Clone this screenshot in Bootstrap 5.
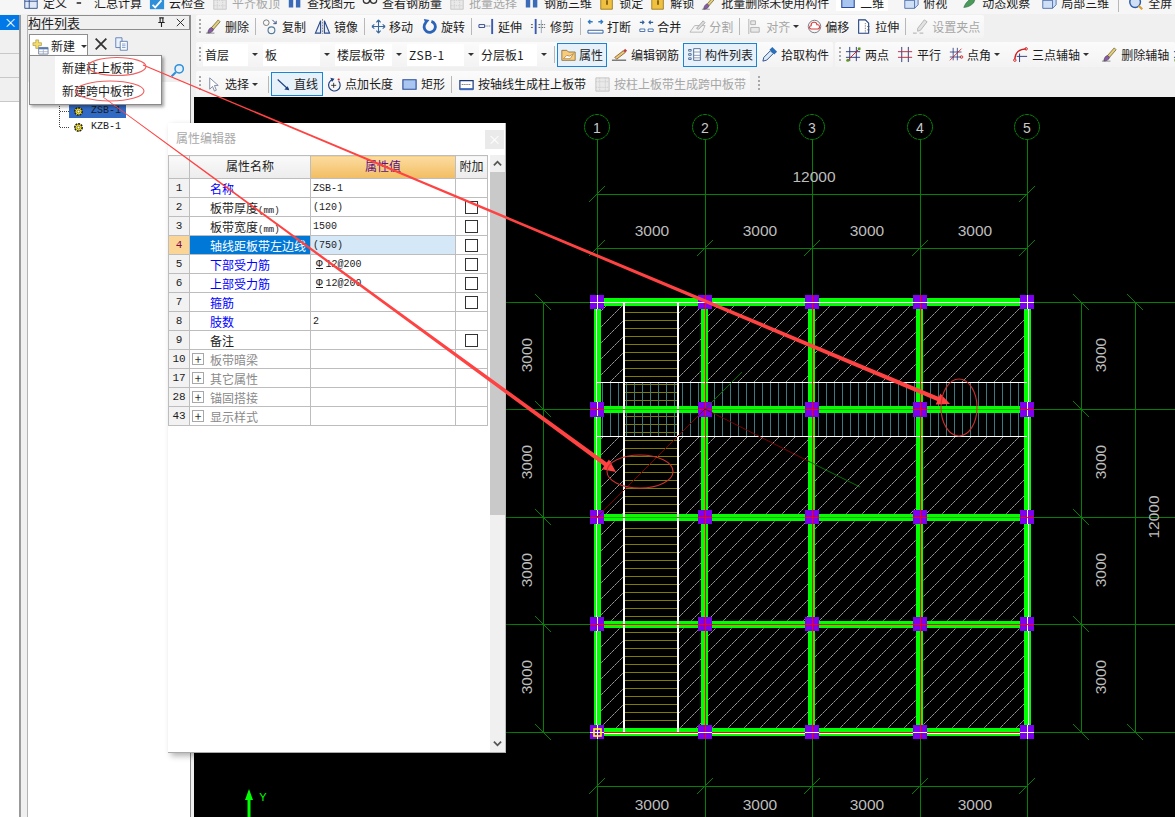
<!DOCTYPE html>
<html lang="zh-CN">
<head>
    <meta charset="UTF-8">
    <meta name="viewport" content="width=device-width, initial-scale=1.0">
    <title>构件列表</title>
    <link href="https://cdn.jsdelivr.net/npm/bootstrap@5.3.3/dist/css/bootstrap.min.css" rel="stylesheet">
    <style>
        body { margin: 0; background: #f0f0f0; font-family: "Noto Sans CJK SC", "Liberation Sans", sans-serif; font-size: 12px; color: #1c1c1c; }
        .app-frame { width: 1175px; height: 817px; overflow: hidden; background: #f0f0f0; }

        /* clipped ribbon along the top */
        .top-strip { height: 14px; overflow: hidden; }
        .top-inner { height: 24px; margin-top: -9px; padding-left: 23px; gap: 7px; background: #f6f6f6; }
        .top-item { gap: 4px; line-height: 1; white-space: nowrap; }
        .top-item svg { width: 16px; height: 16px; flex: none; }
        .top-now { width: 52px; background: #fff; padding-left: 4px; }
        .is-off { color: #a6a6a6; }

        /* left panes */
        .far-pane { width: 22px; flex: none; }
        .far-inner { width: 21px; height: 100%; margin-top: 1px; background: #fff; border-right: 2px solid #9a9a9a; }
        .far-tab { height: 15px; background: #0078e7; color: #fff; font-size: 13px; line-height: 14px; text-align: right; padding-right: 2px; }
        .far-row { height: 24px; background: #f0f0f0; border-bottom: 1px solid #c8c8c8; }
        .gap-pane { width: 5px; flex: none; }
        .list-pane { width: 164px; flex: none; margin-top: 1px; background: #fff; border-left: 1px solid #b4b4b4; border-right: 1px solid #8e8e8e; }
        .pane-title { height: 15px; font-size: 13px; line-height: 14px; border: 1px solid #8c8c8c; border-left: 0; background: #f0f0f0; padding: 0 3px 0 0; }
        .pane-title svg { width: 11px; height: 11px; }
        .pane-tools { height: 28px; background: #f0f0f0; padding-left: 1px; gap: 5px; }
        .new-btn { width: 59px; height: 24px; margin-top: 3px; background: #fff; border: 1px solid #8e8e8e; border-bottom: 0; gap: 2px; padding-left: 2px; }
        .new-btn svg { width: 17px; height: 17px; }
        .pane-tools > svg { width: 16px; height: 16px; }
        .pane-search { height: 24px; background: #f0f0f0; padding-right: 5px; }
        .pane-search svg { width: 15px; height: 15px; }
        .tree-list { margin: 21px 0 0 31px; height: 24px; border-left: 1px dotted #444; }
        .tree-row { height: 16px; font-family: "Liberation Mono", monospace; font-size: 10px; }
        .tree-dash { width: 9px; border-top: 1px dotted #444; }
        .tree-name { width: 57px; height: 14px; gap: 7px; padding-left: 4px; line-height: 14px; }
        .tree-name svg { width: 11px; height: 11px; }
        .tree-on { background: #316ac5; }

        /* menu on top of the panel */
        .new-menu { position: absolute; display: block; left: 29px; top: 55px; width: 133px; height: 50px; min-width: 0; padding: 0; border: 1px solid #8a8a8a; border-radius: 0; box-shadow: 2px 2px 3px rgba(0,0,0,.35); background: linear-gradient(90deg, #f1f1f1 25px, #fff 25px); z-index: 20; }
        .new-menu .dropdown-item { padding: 0 0 0 32px; height: 23px; line-height: 23px; font-size: 12px; color: #1c1c1c; }

        /* toolbars */
        .work-pane { margin-left: 3px; min-width: 0; }
        .tool-rows { padding-left: 2px; }
        .tool-line { gap: 2px; white-space: nowrap; }
        .line-a { height: 23px; margin: 1px 0 4px; }
        .line-b { height: 25px; margin-bottom: 4px; }
        .line-c { height: 26px; }
        .tool-block { padding-left: 3px; background: linear-gradient(#fbfbfb, #f3f3f3); border-radius: 2px; }
        .tool-tail { flex: 1 1 auto; min-width: 0; overflow: hidden; padding-left: 4px; }
        .grip { width: 2px; height: 16px; flex: none; background: repeating-linear-gradient(#a8a8a8 0 2px, transparent 2px 4px); }
        .grip-out { margin-left: 6px; }
        .tsep { width: 1px; height: 17px; margin: 0 2px; flex: none; background: #b8b8b8; }
        .tbtn { gap: 3px; padding: 0 4px; line-height: 1; flex: none; }
        .tbtn svg { width: 17px; height: 17px; flex: none; }
        .tbtn svg.ti-s { width: 15px; }
        .tbtn-on { height: 24px; border: 1px solid #1a84d8; background: #e6f1fa; padding: 0 3px; }
        .tbtn-wide { padding: 0 4px; }
        .tcaret { width: 0; height: 0; margin-left: 0; border: 3px solid transparent; border-top: 3px solid #333; border-bottom: 0; flex: none; }
        .combo { height: 22px; margin-right: 1px; flex: none; }
        .combo-box { background: #fff; height: 22px; line-height: 22px; padding-left: 2px; flex: 1 1 auto; }
        .combo-arrow { width: 14px; text-align: center; flex: none; display: flex; align-items: center; justify-content: center; }
        .combo-a { width: 59px; margin-left: 2px; }
        .combo-b { width: 71px; }
        .combo-c { width: 71px; }
        .combo-d { width: 71px; }
        .combo-e { width: 72px; }
        .latin-up { font-family: "Noto Sans CJK SC", sans-serif; letter-spacing: .6px; }

        /* drawing */
        .cad-box { background: #000; min-height: 0; }
        .cad-box svg { display: block; }
        .cad-label { font-family: "Liberation Sans", sans-serif; font-size: 15.5px; fill: #bdbdbd; }
        .cad-num { font-family: "Liberation Sans", sans-serif; font-size: 14px; fill: #c8c8c8; }
        .cad-y { font-family: "Liberation Sans", sans-serif; font-size: 11px; fill: #00ff00; }

        /* property dialog */
        .prop-win { position: absolute; left: 168px; top: 123px; width: 338px; height: 630px; border: 0; border-right: 1px solid #bbb; border-bottom: 1px solid #aaa; border-radius: 0; background: #fff; box-shadow: 3px 3px 6px rgba(0,0,0,.3); z-index: 10; }
        .prop-head { height: 32px; padding: 6px 1px 0 8px; color: #a9a9a9; font-size: 12px; }
        .prop-close { width: 19px; height: 19px; margin-top: 1px; background: #eaeaea; color: #fff; font-size: 13px; line-height: 18px; text-align: center; }
        .prop-grid { width: 319px; table-layout: fixed; margin: 0; border-color: #bdbdbd; font-size: 12px; }
        .prop-grid > thead > tr > th, .prop-grid > tbody > tr > td { height: 19px; padding: 0; line-height: 17px; font-weight: 400; vertical-align: middle; color: #1c1c1c; background-color: #fff; border-color: #bdbdbd; overflow: hidden; white-space: nowrap; }
        .prop-grid > thead > tr > th { height: 23px; padding-bottom: 3px; text-align: center; background: linear-gradient(#fafafa, #ececec); }
        .prop-grid > thead > tr > th.head-val { background: linear-gradient(#fcdc9f, #f2bd62); color: #5c0f86; }
        .prop-grid > tbody > tr > td.cell-no { background-color: #f2f2f2; text-align: center; font-family: "Liberation Mono", monospace; font-size: 11px; }
        .prop-grid > tbody > tr > td.cell-name { padding-left: 20px; }
        .prop-grid > tbody > tr > td.name-link { color: #0000ff; }
        .prop-grid > tbody > tr > td.name-group { color: #8a8a8a; padding-left: 2px; }
        .prop-grid > tbody > tr > td.cell-val { padding-left: 2px; font-family: "Liberation Mono", monospace; font-size: 10px; }
        .prop-grid > tbody > tr > td.cell-add { text-align: center; }
        .prop-grid > tbody > tr.row-now > td.cell-no { background-color: #fbd595; color: #7c0a4a; }
        .prop-grid > tbody > tr.row-now > td.cell-name { background-color: #0078d7; color: #fff; }
        .prop-grid > tbody > tr.row-now > td.cell-val { background-color: #d5e8f8; }
        .col-no { width: 21px; }
        .col-name { width: 121px; }
        .col-val { width: 145px; }
        .col-add { width: 32px; }
        .unit-mm { font-family: "Liberation Mono", monospace; font-size: 9px; line-height: 1; }
        .rebar-mark { border-bottom: 1px solid #222; font-size: 11px; line-height: 8px; display: inline-block; margin: 0 3px 0 3px; }
        .add-box { display: block; width: 13px; height: 13px; margin: 0 auto; border: 1px solid #333; border-radius: 0; background: #fff; appearance: none; }
        .plus-box { width: 12px; height: 12px; border: 1px solid #a8a8a8; color: #333; font-size: 12px; line-height: 10px; text-align: center; margin-right: 6px; flex: none; }
        .prop-scroll { width: 17px; margin-left: 2px; background: #f0f0f0; }
        .scroll-end { height: 17px; }
        .scroll-end svg { width: 9px; height: 9px; }
        .scroll-thumb { height: 343px; background: #c9c9c9; }

        .note-layer { position: absolute; left: 0; top: 0; z-index: 30; pointer-events: none; }
    </style>
</head>
<body>
<svg width="0" height="0" class="d-block position-absolute">
    <defs>
        <symbol id="i-del" viewBox="0 0 18 18"><path d="M1 16h9" stroke="#888" fill="none"/><path d="M7 10l7-8 2 2-7 8z" fill="#e3cf7a" stroke="#6a5a2a" stroke-width=".8"/><path d="M3 16c0-3 2-6 4-6l2 2c0 2-3 4-6 4z" fill="#8a5aa8" stroke="#444" stroke-width=".6"/></symbol>
        <symbol id="i-copy" viewBox="0 0 18 18"><circle cx="4.5" cy="5" r="3" fill="none" stroke="#777"/><circle cx="10" cy="13" r="3.6" fill="none" stroke="#557a9a" stroke-width="1.2"/><path d="M11 2l4 4m0-3v3h-3" fill="none" stroke="#334a7a"/></symbol>
        <symbol id="i-mirror" viewBox="0 0 18 18"><path d="M1.5 16L7 3v13zM16.500 16L11 3v13z" fill="#e8eef8" stroke="#2b4a8a" stroke-width="1.200"/><path d="M9 1v16" stroke="#888" stroke-dasharray="2 1"/></symbol>
        <symbol id="i-move" viewBox="0 0 18 18"><path d="M9 1v16M1 9h16M9 1L6.500 4M9 1l2.500 3M9 17l-2.500-3M9 17l2.500-3M1 9l3-2.500M1 9l3 2.500M17 9l-3-2.500M17 9l-3 2.500" fill="none" stroke="#35689e" stroke-width="1.300"/></symbol>
        <symbol id="i-rotate" viewBox="0 0 18 18"><path d="M11 3.500a6 6 0 1 1-6 1.500" fill="none" stroke="#2a63b8" stroke-width="3"/><path d="M3 1l6 1-4 5z" fill="#2a63b8"/></symbol>
        <symbol id="i-extend" viewBox="0 0 18 18"><path d="M1 7h6v3H1z" fill="#fff" stroke="#2a3f8a"/><path d="M8 8.500h5" stroke="#555" stroke-dasharray="1 1"/><path d="M15 1v16" stroke="#3a5ab0" stroke-width="2"/></symbol>
        <symbol id="i-trim" viewBox="0 0 18 18"><path d="M6 1v16" stroke="#3a5ab0" stroke-width="2"/><path d="M1 7h3M1 10h3M9 7h7M9 10h7" stroke="#555" stroke-dasharray="2 1"/><path d="M12 2v14" stroke="#9ab" /></symbol>
        <symbol id="i-break" viewBox="0 0 18 18"><path d="M1 13h16v3H1z" fill="#fff" stroke="#2f5f9f"/><path d="M2 4h4M3.500 2L1.500 4l2 2M16 4h-4M14.500 2l2 2-2 2" fill="none" stroke="#2f7ac0" stroke-width="1.400"/></symbol>
        <symbol id="i-merge" viewBox="0 0 18 18"><path d="M1 12h6v3H1zM11 12h6v3h-6z" fill="#fff" stroke="#2f5f9f"/><path d="M1 4h5M4 2l2 2-2 2M17 4h-5M14 2l-2 2 2 2" fill="none" stroke="#2f5f9f" stroke-width="1.300"/></symbol>
        <symbol id="i-split" viewBox="0 0 18 18"><path d="M1 15l5-7h11l-3 7z" fill="#f4f4f4" stroke="#b8b8b8"/><path d="M8 11l7-8 2 2-7 7z" fill="#ddd" stroke="#aaa"/></symbol>
        <symbol id="i-align" viewBox="0 0 18 18"><path d="M3 1v16M5 3h5v4H5zM5 10h9v5H5z" fill="#e8e8e8" stroke="#b0b0b0"/></symbol>
        <symbol id="i-offset" viewBox="0 0 18 18"><circle cx="9" cy="9" r="7.500" fill="#f6f6f6" stroke="#667"/><path d="M5 12a2 2 0 0 1 0-4 3.500 3.500 0 0 1 7-1 2.500 2.500 0 0 1 1 5z" fill="#fff" stroke="#d84040" stroke-width="1.300"/></symbol>
        <symbol id="i-stretch" viewBox="0 0 18 18"><path d="M2 1h8l4 4v12H2z" fill="#fff" stroke="#1e3f80" stroke-width="1.300"/><path d="M10 5v12M12 9h4M12 13h4" stroke="#555" stroke-dasharray="1 1"/></symbol>
        <symbol id="i-setpt" viewBox="0 0 18 18"><path d="M1 16h4M8 16h4" stroke="#aaa"/><path d="M6 11l7-9 3 2-7 9-3 1z" fill="#e2e2e2" stroke="#b4b4b4"/></symbol>
        <symbol id="i-prop" viewBox="0 0 18 18"><path d="M1 4h6l2 2h8v10H1z" fill="#f7cd7c" stroke="#8a6a3a"/><path d="M3 14l4-4 3 1 5-3-4 6z" fill="#fff" stroke="#a0702a" stroke-width=".8"/></symbol>
        <symbol id="i-edit" viewBox="0 0 18 18"><path d="M1 15h15" stroke="#333"/><path d="M4 12l9-7 2 2-9 7z" fill="#e8c878" stroke="#7a4a1a" stroke-width=".8"/><path d="M13 5l2-2 2 2-2 2z" fill="#c04040"/></symbol>
        <symbol id="i-list" viewBox="0 0 18 18"><path d="M2 3h3v2H2zM2 8h3v2H2zM2 13h3v2H2z" fill="#fff" stroke="#3a5a8a"/><path d="M8 2h8v14H8z" fill="#fff" stroke="#3a5a8a"/><path d="M8 6h8M8 10h8M8 13h8" stroke="#7a8ab0"/></symbol>
        <symbol id="i-pick" viewBox="0 0 18 18"><path d="M2 16l1-4 7-7 3 3-7 7z" fill="#dcebf8" stroke="#2a4a8a"/><path d="M9 4l3-3 5 5-3 3z" fill="#2a6fb8"/></symbol>
        <symbol id="i-2pt" viewBox="0 0 18 18"><path d="M5 1v15M12 1v15M1 6h15M1 12h15" stroke="#2b3a80" fill="none"/><path d="M2 16L16 2" stroke="#d02020"/><circle cx="3" cy="15" r="1.600" fill="#5a9a20"/><circle cx="15" cy="3" r="1.600" fill="#5a9a20"/></symbol>
        <symbol id="i-par" viewBox="0 0 18 18"><path d="M5 1v16M12 1v16" stroke="#2b3a80"/><path d="M1 6h15M1 12h15" stroke="#c02840"/></symbol>
        <symbol id="i-ang" viewBox="0 0 18 18"><path d="M5 1v15M10 1v15M1 6h14M1 12h14" stroke="#2b3a80"/><path d="M1 16L15 2" stroke="#d02020"/><circle cx="15" cy="12" r="1.600" fill="none" stroke="#d02020"/></symbol>
        <symbol id="i-arc" viewBox="0 0 18 18"><path d="M3 14C3 7 8 3 15 3" fill="none" stroke="#d02020" stroke-width="1.300"/><circle cx="3" cy="15" r="1.300" fill="none" stroke="#d02020"/><circle cx="15" cy="3" r="1.300" fill="none" stroke="#d02020"/><path d="M8 8v9M5 11h11" stroke="#2b3a80"/></symbol>
        <symbol id="i-cursor" viewBox="0 0 18 18"><path d="M5 2v12l3-3 2 5 2-1-2-5h4z" fill="#fff" stroke="#8088a0"/></symbol>
        <symbol id="i-line" viewBox="0 0 18 18"><path d="M2 3l13 12" stroke="#1e3f80" stroke-width="1.300"/><path d="M16 16l-6-1 4-4z" fill="#1e3f80"/></symbol>
        <symbol id="i-len" viewBox="0 0 18 18"><path d="M7 3a7 7 0 1 0 7 2" fill="none" stroke="#1e3f80" stroke-width="1.400"/><path d="M4 1l5 1-3 4z" fill="#1e3f80"/><path d="M8 7v6M5 10h6" stroke="#222"/><circle cx="14" cy="3" r="1.300" fill="#d02020"/></symbol>
        <symbol id="i-rect" viewBox="0 0 18 18"><path d="M2 4h14v10H2z" fill="#a9c6f0" stroke="#2a4a9a" stroke-width="1.200"/></symbol>
        <symbol id="i-gen" viewBox="0 0 18 18"><path d="M2 5h14v9H2z" fill="#fff" stroke="#1e3a7a" stroke-width="1.300"/><path d="M4 9h10" stroke="#444" stroke-dasharray="1 1"/><path d="M2 14h14" stroke="#3a6ac0" stroke-width="2"/></symbol>
        <symbol id="i-gen2" viewBox="0 0 18 18"><path d="M2 2h14v14H2z" fill="#e9e9e9" stroke="#c4c4c4"/><path d="M6 2v14M12 2v14M2 6h14M2 12h14" stroke="#c9c9c9" stroke-dasharray="1 1"/></symbol>
        <symbol id="i-new" viewBox="0 0 18 18"><path d="M1 5h3V2h3v3h3v3H7v3H4V8H1z" fill="#f3dc6a" stroke="#a08a30" stroke-width=".6"/><path d="M7 10h10v7H7z" fill="#fff" stroke="#7a8aa8"/><path d="M7 10h10v2H7z" fill="#5a7ab0"/><path d="M7 14.500h10M12 12v5" stroke="#9aa8c0" stroke-width=".8"/></symbol>
        <symbol id="i-cross" viewBox="0 0 18 18"><path d="M3 3l12 12M15 3L3 15" stroke="#333" stroke-width="2"/></symbol>
        <symbol id="i-docs" viewBox="0 0 18 18"><path d="M2 2h7v11H2z" fill="#eaf1fb" stroke="#5a7ab0"/><path d="M7 6h8v10H7z" fill="#fff" stroke="#5a7ab0"/><path d="M9 9h4M9 11h4M9 13h4" stroke="#7a9ac8"/></symbol>
        <symbol id="i-pin" viewBox="0 0 12 12"><path d="M3.500 1h5M4.500 1v5M7.500 1v5M2.500 6h7M6 6v5" fill="none" stroke="#222" stroke-width="1.200"/></symbol>
        <symbol id="i-close" viewBox="0 0 12 12"><path d="M2 2l8 8M10 2l-8 8" stroke="#222"/></symbol>
        <symbol id="i-search" viewBox="0 0 18 18"><circle cx="11" cy="7" r="5" fill="#e4f1fc" stroke="#2f8fd8" stroke-width="1.800"/><path d="M7 11l-5 5" stroke="#2f8fd8" stroke-width="2.500"/></symbol>
        <symbol id="i-gear" viewBox="0 0 12 12"><circle cx="6" cy="6" r="4" fill="#f6e21a" stroke="#222" stroke-width="1.800" stroke-dasharray="2 1"/><circle cx="6" cy="6" r="1.500" fill="#fff" stroke="#333" stroke-width=".6"/></symbol>
        <symbol id="i-table" viewBox="0 0 18 18"><path d="M2 3h14v12H2z" fill="#dfe8f6" stroke="#2b4a8a"/><path d="M2 7h14M7 3v12" stroke="#2b4a8a"/></symbol>
        <symbol id="i-sum" viewBox="0 0 18 18"><path d="M3 4h8M3 9h5" stroke="#222" stroke-width="1.600"/></symbol>
        <symbol id="i-cloud" viewBox="0 0 18 18"><path d="M1 3h16v13H1z" fill="#2f8fd8"/><path d="M4 11l3 3 7-8" fill="none" stroke="#fff" stroke-width="2"/></symbol>
        <symbol id="i-find" viewBox="0 0 18 18"><path d="M2 2h5v12H2zM10 2h5v12h-5z" fill="#3a6ab8"/></symbol>
        <symbol id="i-glass" viewBox="0 0 18 18"><circle cx="5" cy="6" r="3.500" fill="none" stroke="#333" stroke-width="1.400"/><circle cx="13" cy="6" r="3.500" fill="none" stroke="#333" stroke-width="1.400"/></symbol>
        <symbol id="i-lock" viewBox="0 0 18 18"><path d="M2 1h13v15H2z" fill="#f0c040" stroke="#9a7a20"/><path d="M8 6h2v5H8z" fill="#7a5a10"/></symbol>
        <symbol id="i-box" viewBox="0 0 18 18"><path d="M2 6l4-4h11v9l-4 4H2z" fill="#cfe0f6" stroke="#4a6aa8"/><path d="M2 6h11v9M13 6l4-4" fill="none" stroke="#4a6aa8"/></symbol>
        <symbol id="i-orbit" viewBox="0 0 18 18"><path d="M2 14C5 6 11 3 16 2l-3 7c-3 3-7 5-11 5z" fill="#4a9a5a" stroke="#2a5a3a" stroke-width=".6"/></symbol>
        <symbol id="i-scan" viewBox="0 0 18 18"><circle cx="8" cy="8" r="6" fill="#cfe0f6" stroke="#2a5aa8" stroke-width="1.600"/><path d="M12 12l4 4" stroke="#d8a030" stroke-width="2.500"/></symbol>
    </defs>
</svg>

<div class="app-frame position-relative d-flex flex-column">
    <!-- Ribbon, cut by the window edge -->
    <div class="top-strip flex-shrink-0">
        <div class="top-inner d-flex align-items-center">
            <span class="top-item d-flex align-items-center"><svg><use href="#i-table"/></svg>定义</span>
            <span class="top-item d-flex align-items-center"><svg><use href="#i-sum"/></svg>汇总计算</span>
            <span class="top-item d-flex align-items-center"><svg><use href="#i-cloud"/></svg>云检查</span>
            <span class="top-item d-flex align-items-center is-off"><svg><use href="#i-gen2"/></svg>平齐板顶</span>
            <span class="top-item d-flex align-items-center"><svg><use href="#i-find"/></svg>查找图元</span>
            <span class="top-item d-flex align-items-center"><svg><use href="#i-glass"/></svg>查看钢筋量</span>
            <span class="top-item d-flex align-items-center is-off"><svg><use href="#i-gen2"/></svg>批量选择</span>
            <span class="top-item d-flex align-items-center"><svg><use href="#i-find"/></svg>钢筋三维</span>
            <span class="top-item d-flex align-items-center"><svg><use href="#i-lock"/></svg>锁定</span>
            <span class="top-item d-flex align-items-center"><svg><use href="#i-lock"/></svg>解锁</span>
            <span class="top-item d-flex align-items-center"><svg><use href="#i-del"/></svg>批量删除未使用构件</span>
            <span class="top-item top-now d-flex align-items-center"><svg><use href="#i-rect"/></svg>二维</span>
            <span class="top-item d-flex align-items-center ms-2"><svg><use href="#i-box"/></svg>俯视</span>
            <span class="top-item d-flex align-items-center ms-2"><svg><use href="#i-orbit"/></svg>动态观察</span>
            <span class="top-item d-flex align-items-center ms-1"><svg><use href="#i-box"/></svg>局部三维</span>
            <span class="tsep"></span>
            <span class="top-item d-flex align-items-center"><svg><use href="#i-scan"/></svg>全屏</span>
        </div>
    </div>

    <div class="d-flex flex-grow-1 overflow-hidden">
        <!-- Collapsed navigation pane -->
        <div class="far-pane">
            <div class="far-inner">
                <div class="far-tab">×</div>
                <div class="far-row"></div>
                <div class="far-row"></div>
                <div class="far-row"></div>
            </div>
        </div>
        <div class="gap-pane"></div>

        <!-- 构件列表 -->
        <div class="list-pane d-flex flex-column">
            <div class="pane-title d-flex align-items-center justify-content-between">
                <span>构件列表</span>
                <span class="d-flex gap-2"><svg><use href="#i-pin"/></svg><svg><use href="#i-close"/></svg></span>
            </div>
            <div class="pane-tools d-flex align-items-center">
                <div class="new-btn d-flex align-items-center"><svg><use href="#i-new"/></svg>新建<span class="tcaret ms-1"></span></div>
                <svg><use href="#i-cross"/></svg>
                <svg><use href="#i-docs"/></svg>
            </div>
            <div class="pane-search d-flex align-items-center justify-content-end"><svg><use href="#i-search"/></svg></div>
            <div class="tree-list">
                <div class="tree-row d-flex align-items-center">
                    <span class="tree-dash"></span>
                    <span class="tree-name tree-on d-flex align-items-center"><svg><use href="#i-gear"/></svg>ZSB-1</span>
                </div>
                <div class="tree-row d-flex align-items-center">
                    <span class="tree-dash"></span>
                    <span class="tree-name d-flex align-items-center"><svg><use href="#i-gear"/></svg>KZB-1</span>
                </div>
            </div>
        </div>

        <!-- Toolbars and drawing -->
        <div class="work-pane d-flex flex-column flex-grow-1">
            <div class="tool-rows">
                <div class="tool-line line-a d-flex">
                    <div class="tool-block d-flex align-items-center">
                        <span class="grip"></span>
                        <span class="tbtn d-flex align-items-center"><svg><use href="#i-del"/></svg>删除</span>
                        <span class="tsep"></span>
                        <span class="tbtn d-flex align-items-center"><svg><use href="#i-copy"/></svg>复制</span>
                        <span class="tbtn d-flex align-items-center"><svg><use href="#i-mirror"/></svg>镜像</span>
                        <span class="tsep"></span>
                        <span class="tbtn d-flex align-items-center"><svg class="ti-s"><use href="#i-move"/></svg>移动</span>
                        <span class="tbtn d-flex align-items-center"><svg><use href="#i-rotate"/></svg>旋转</span>
                        <span class="tsep"></span>
                        <span class="tbtn d-flex align-items-center"><svg><use href="#i-extend"/></svg>延伸</span>
                        <span class="tbtn d-flex align-items-center"><svg><use href="#i-trim"/></svg>修剪</span>
                        <span class="tsep"></span>
                        <span class="tbtn d-flex align-items-center"><svg><use href="#i-break"/></svg>打断</span>
                        <span class="tbtn d-flex align-items-center"><svg class="ti-s"><use href="#i-merge"/></svg>合并</span>
                        <span class="tbtn d-flex align-items-center is-off"><svg><use href="#i-split"/></svg>分割</span>
                        <span class="tsep"></span>
                        <span class="tbtn d-flex align-items-center is-off"><svg><use href="#i-align"/></svg>对齐<span class="tcaret"></span></span>
                        <span class="tbtn d-flex align-items-center"><svg class="ti-s"><use href="#i-offset"/></svg>偏移</span>
                        <span class="tbtn d-flex align-items-center"><svg class="ti-s"><use href="#i-stretch"/></svg>拉伸</span>
                        <span class="tsep"></span>
                        <span class="tbtn d-flex align-items-center is-off"><svg><use href="#i-setpt"/></svg>设置夹点</span>
                    </div>
                </div>

                <div class="tool-line line-b d-flex">
                    <div class="tool-block d-flex align-items-center">
                        <span class="grip"></span>
                        <div class="combo combo-a d-flex"><span class="combo-box">首层</span><span class="combo-arrow"><span class="tcaret"></span></span></div>
                        <div class="combo combo-b d-flex"><span class="combo-box">板</span><span class="combo-arrow"><span class="tcaret"></span></span></div>
                        <div class="combo combo-c d-flex"><span class="combo-box">楼层板带</span><span class="combo-arrow"><span class="tcaret"></span></span></div>
                        <div class="combo combo-d d-flex"><span class="combo-box latin-up">ZSB-1</span><span class="combo-arrow"><span class="tcaret"></span></span></div>
                        <div class="combo combo-e d-flex"><span class="combo-box">分层板1</span><span class="combo-arrow"><span class="tcaret"></span></span></div>
                        <span class="tsep"></span>
                        <span class="tbtn tbtn-on d-flex align-items-center"><svg class="ti-s"><use href="#i-prop"/></svg>属性</span>
                        <span class="tbtn d-flex align-items-center"><svg><use href="#i-edit"/></svg>编辑钢筋</span>
                        <span class="tbtn tbtn-on d-flex align-items-center"><svg class="ti-s"><use href="#i-list"/></svg>构件列表</span>
                        <span class="tbtn d-flex align-items-center"><svg><use href="#i-pick"/></svg>拾取构件</span>
                    </div>
                    <div class="tool-block tool-tail d-flex align-items-center">
                        <span class="grip"></span>
                        <span class="tbtn d-flex align-items-center"><svg><use href="#i-2pt"/></svg>两点</span>
                        <span class="tbtn d-flex align-items-center"><svg><use href="#i-par"/></svg>平行</span>
                        <span class="tbtn d-flex align-items-center"><svg class="ti-s"><use href="#i-ang"/></svg>点角<span class="tcaret"></span></span>
                        <span class="tbtn d-flex align-items-center ms-1"><svg><use href="#i-arc"/></svg>三点辅轴<span class="tcaret"></span></span>
                        <span class="tbtn d-flex align-items-center ms-1"><svg><use href="#i-del"/></svg>删除辅轴</span>
                        <span class="tbtn d-flex align-items-center ps-0"><svg><use href="#i-2pt"/></svg></span>
                    </div>
                </div>

                <div class="tool-line line-c d-flex">
                    <div class="tool-block d-flex align-items-center">
                        <span class="grip"></span>
                        <span class="tbtn d-flex align-items-center me-1"><svg><use href="#i-cursor"/></svg>选择<span class="tcaret"></span></span>
                        <span class="tsep"></span>
                        <span class="tbtn tbtn-on tbtn-wide d-flex align-items-center"><svg class="ti-s"><use href="#i-line"/></svg>直线</span>
                        <span class="tbtn d-flex align-items-center"><svg class="ti-s"><use href="#i-len"/></svg>点加长度</span>
                        <span class="tbtn d-flex align-items-center"><svg><use href="#i-rect"/></svg>矩形</span>
                        <span class="tsep"></span>
                        <span class="tbtn d-flex align-items-center"><svg><use href="#i-gen"/></svg>按轴线生成柱上板带</span>
                        <span class="tbtn d-flex align-items-center is-off"><svg><use href="#i-gen2"/></svg>按柱上板带生成跨中板带</span>
                    </div>
                    <span class="grip grip-out align-self-center"></span>
                </div>
            </div>

            <div class="cad-box flex-grow-1">
                <svg id="cad" width="981" height="720" viewBox="194 97 981 720"></svg>
            </div>
        </div>
    </div>

    <!-- New-item menu -->
    <ul class="dropdown-menu new-menu show">
        <li><a class="dropdown-item" href="#">新建柱上板带</a></li>
        <li><a class="dropdown-item" href="#">新建跨中板带</a></li>
    </ul>

    <!-- Property editor -->
    <div class="card prop-win">
        <div class="prop-head d-flex justify-content-between">
            <span>属性编辑器</span>
            <span class="prop-close">×</span>
        </div>
        <div class="d-flex flex-grow-1">
            <table class="table table-bordered prop-grid align-self-start">
                <thead>
                    <tr><th class="col-no"></th><th class="col-name">属性名称</th><th class="col-val head-val">属性值</th><th class="col-add">附加</th></tr>
                </thead>
                <tbody>
                    <tr><td class="cell-no">1</td><td class="cell-name name-link">名称</td><td class="cell-val">ZSB-1</td><td class="cell-add"></td></tr>
                    <tr><td class="cell-no">2</td><td class="cell-name">板带厚度<span class="unit-mm">(mm)</span></td><td class="cell-val">(120)</td><td class="cell-add"><input class="add-box" type="checkbox"></td></tr>
                    <tr><td class="cell-no">3</td><td class="cell-name">板带宽度<span class="unit-mm">(mm)</span></td><td class="cell-val">1500</td><td class="cell-add"><input class="add-box" type="checkbox"></td></tr>
                    <tr class="row-now"><td class="cell-no">4</td><td class="cell-name">轴线距板带左边线</td><td class="cell-val">(750)</td><td class="cell-add"><input class="add-box" type="checkbox"></td></tr>
                    <tr><td class="cell-no">5</td><td class="cell-name name-link">下部受力筋</td><td class="cell-val"><span class="rebar-mark">Φ</span>12@200</td><td class="cell-add"><input class="add-box" type="checkbox"></td></tr>
                    <tr><td class="cell-no">6</td><td class="cell-name name-link">上部受力筋</td><td class="cell-val"><span class="rebar-mark">Φ</span>12@200</td><td class="cell-add"><input class="add-box" type="checkbox"></td></tr>
                    <tr><td class="cell-no">7</td><td class="cell-name name-link">箍筋</td><td class="cell-val"></td><td class="cell-add"><input class="add-box" type="checkbox"></td></tr>
                    <tr><td class="cell-no">8</td><td class="cell-name name-link">肢数</td><td class="cell-val">2</td><td class="cell-add"></td></tr>
                    <tr><td class="cell-no">9</td><td class="cell-name">备注</td><td class="cell-val"></td><td class="cell-add"><input class="add-box" type="checkbox"></td></tr>
                    <tr><td class="cell-no">10</td><td class="cell-name name-group"><div class="d-flex align-items-center"><span class="plus-box">+</span>板带暗梁</div></td><td class="cell-val"></td><td class="cell-add"></td></tr>
                    <tr><td class="cell-no">17</td><td class="cell-name name-group"><div class="d-flex align-items-center"><span class="plus-box">+</span>其它属性</div></td><td class="cell-val"></td><td class="cell-add"></td></tr>
                    <tr><td class="cell-no">28</td><td class="cell-name name-group"><div class="d-flex align-items-center"><span class="plus-box">+</span>锚固搭接</div></td><td class="cell-val"></td><td class="cell-add"></td></tr>
                    <tr><td class="cell-no">43</td><td class="cell-name name-group"><div class="d-flex align-items-center"><span class="plus-box">+</span>显示样式</div></td><td class="cell-val"></td><td class="cell-add"></td></tr>
                </tbody>
            </table>
            <div class="prop-scroll d-flex flex-column">
                <div class="scroll-end d-flex align-items-center justify-content-center"><svg viewBox="0 0 10 10"><path d="M1 7l4-4 4 4" fill="none" stroke="#555" stroke-width="2"/></svg></div>
                <div class="scroll-thumb"></div>
                <div class="flex-grow-1"></div>
                <div class="scroll-end d-flex align-items-center justify-content-center"><svg viewBox="0 0 10 10"><path d="M1 3l4 4 4-4" fill="none" stroke="#555" stroke-width="2"/></svg></div>
            </div>
        </div>
    </div>

    <!-- Red annotations drawn over the whole window -->
    <svg id="notes" class="note-layer" width="1175" height="817" viewBox="0 0 1175 817"></svg>
</div>

<script src="https://cdn.jsdelivr.net/npm/bootstrap@5.3.3/dist/js/bootstrap.bundle.min.js"></script>
<script>
document.addEventListener('DOMContentLoaded', () => {
    const xs = [597, 705, 812, 920, 1027];
    const ys = [302, 409, 517, 624, 732];
    const axisGreen = '#067f06';
    let out = '';

    const line = (x1, y1, x2, y2, color, w = 1) => {
        out += `<line x1="${x1}" y1="${y1}" x2="${x2}" y2="${y2}" stroke="${color}" stroke-width="${w}" shape-rendering="crispEdges"/>`;
    };
    const rect = (x, y, w, h, fill) => {
        out += `<rect x="${x}" y="${y}" width="${w}" height="${h}" fill="${fill}" shape-rendering="crispEdges"/>`;
    };
    const label = (x, y, text, rotate) => {
        const turn = rotate ? ` transform="rotate(-90 ${x} ${y})"` : '';
        out += `<text class="cad-label" x="${x}" y="${y}" text-anchor="middle" dominant-baseline="central"${turn}>${text}</text>`;
    };
    const tickH = (x, y) => line(x - 8, y + 8, x + 8, y - 8, axisGreen);
    const tickV = (x, y) => line(x - 8, y - 8, x + 8, y + 8, axisGreen);

    // hatch pattern for the slab
    out += `<defs><pattern id="hatch" width="16" height="16" patternUnits="userSpaceOnUse"><path d="M-1 17L17 -1" stroke="#c4c4c4" stroke-width=".8" stroke-dasharray="3 .6"/></pattern></defs>`;
    [[601, 306, 22, 76], [679, 306, 345, 76], [601, 437, 22, 292], [679, 437, 345, 292]].forEach(r => rect(r[0], r[1], r[2], r[3], 'url(#hatch)'));

    // axes
    xs.forEach((x, i) => {
        line(x, 140, x, 817, axisGreen);
        out += `<circle cx="${x}" cy="127" r="12.500" fill="none" stroke="${axisGreen}" stroke-dasharray="5 .6"/>`;
        out += `<text class="cad-num" x="${x}" y="127.500" text-anchor="middle" dominant-baseline="central">${i + 1}</text>`;
    });
    ys.forEach(y => line(506, y, 1175, y, axisGreen));

    // dimension lines, top and bottom
    [194, 248, 786].forEach(y => line(597, y, 1027, y, axisGreen));
    tickH(597, 194); tickH(1027, 194);
    xs.forEach(x => { tickH(x, 248); tickH(x, 786); });
    label(814, 176, '12000');
    [652, 760, 867, 975].forEach(x => { label(x, 230, '3000'); label(x, 804, '3000'); });

    // dimension lines, left and right
    [543, 1081, 1135].forEach(x => line(x, 302, x, 732, axisGreen));
    ys.forEach(y => { tickV(543, y); tickV(1081, y); });
    tickV(1135, 302); tickV(1135, 732);
    [355, 462, 570, 677].forEach(y => { label(526, y, '3000', true); label(1100, y, '3000', true); });
    label(1153, 517, '12000', true);

    // column strip stripes and middle strip bars
    for (let y = 312; y <= 728; y += 8) line(625, y, 677, y, '#807c00');
    for (let x = 602; x <= 1024; x += 8) { line(x, 383, x, 406, '#3a7a80'); line(x, 413, x, 436, '#3a7a80'); }

    // beams
    ys.forEach((y, i) => {
        const edge = i === 0 || i === 4;
        rect(594, y - (edge ? 4 : 3), 437, edge ? 8 : 7, '#00ff00');
    });
    xs.forEach(x => rect(x === 597 ? 594 : (x === 1027 ? 1024 : x - 4), 298, 7, 438, '#00ff00'));

    // strip outlines
    line(624, 302, 624, 732, '#fff', 2);
    line(678, 302, 678, 732, '#fff', 2);
    line(597, 382, 1027, 382, '#fff');
    line(597, 436, 1027, 436, '#fff');

    // centre lines over the beams
    [705, 812, 920].forEach(x => line(x, 298, x, 736, '#ff0000'));
    [624, 732].forEach(y => line(597, y, 1031, y, '#ff0000'));
    line(597, 302, 1028, 302, '#fff');
    line(597, 733, 1028, 733, '#fff');
    line(596, 298, 596, 736, '#fff');
    line(1028, 298, 1028, 736, '#fff');
    [409, 517].forEach(y => line(597, y, 1031, y, '#34a000'));

    // columns
    xs.forEach(x => ys.forEach(y => {
        rect(x - 7, y - 7, 14, y === 409 ? 15 : 14, '#7f00ee');
        line(x, y - 7, x, y + 7, x === 597 || x === 1027 ? '#fff' : '#ff0000');
        line(x - 7, y, x + 7, y, y === 302 || y === 732 ? '#fff' : '#ff0000');
    }));
    out += `<rect x="594" y="729" width="7" height="7" fill="none" stroke="#ffff00" stroke-width="1.600"/>`;

    // skew axis set
    out += `<g fill="none" stroke-width="1">`
        + `<path d="M705 409L597 517" stroke="#7a0000"/><path d="M705 409L742 372" stroke="#067006"/>`
        + `<path d="M705 409L810 462" stroke="#7a0000"/><path d="M810 462L860 487" stroke="#067006"/></g>`;

    // Y marker
    out += `<path d="M247.500 817V800H245L249 789L253 800H250.500V817Z" fill="#00ff00"/>`;
    out += `<text class="cad-y" x="263" y="801" text-anchor="middle">Y</text>`;

    document.getElementById('cad').innerHTML = out;

    // annotations
    const arrow = (x1, y1, x2, y2) => {
        const len = Math.hypot(x2 - x1, y2 - y1);
        const ux = (x2 - x1) / len, uy = (y2 - y1) / len;
        const nx = -uy, ny = ux;
        const bx = x2 - ux * 13, by = y2 - uy * 13;
        const p = (x, y, d) => `${(x + nx * d).toFixed(1)},${(y + ny * d).toFixed(1)}`;
        return `<polygon fill="#ff4242" points="${p(x1, y1, .4)} ${p(bx, by, 2.2)} ${p(bx, by, 6)} ${x2},${y2} ${p(bx, by, -6)} ${p(bx, by, -2.2)} ${p(x1, y1, -.4)}"/>`;
    };
    const ring = (cx, cy, rx, ry, color) =>
        `<ellipse cx="${cx}" cy="${cy}" rx="${rx}" ry="${ry}" fill="none" stroke="${color}" stroke-width="1.100"/>`;

    document.getElementById('notes').innerHTML =
        arrow(143, 65, 950, 404) + arrow(103, 97, 616, 472)
        + ring(117, 66.5, 29, 9, '#f06060') + ring(110, 91, 34, 10, '#f06060')
        + ring(640, 471.5, 33, 16.5, '#c83030') + ring(959, 407.5, 18, 28.5, '#c83030');
});
</script>
</body>
</html>
